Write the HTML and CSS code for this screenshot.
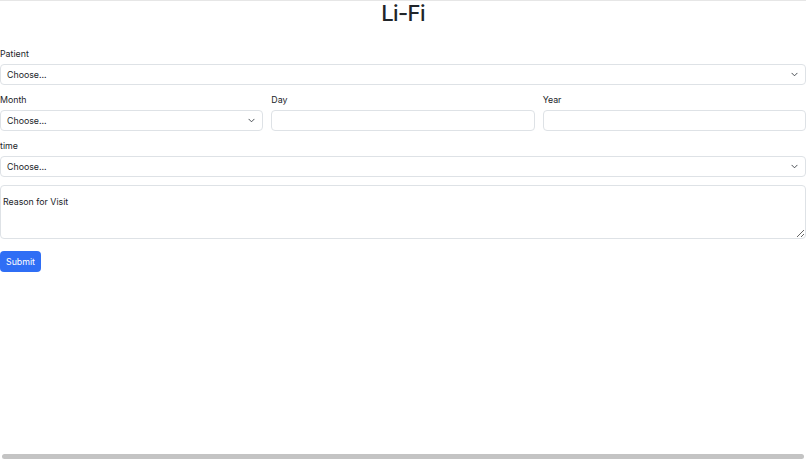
FILE: index.html
```html
<!DOCTYPE html>
<html lang="en">
<head>
<meta charset="utf-8">
<title>Li-Fi</title>
<link rel="stylesheet" href="styles.css">
</head>
<body>
<div class="page">
  <h1 class="title">Li-Fi</h1>
  <form class="form">
    <div class="field">
      <label class="label">Patient</label>
      <div class="select"><span>Choose...</span><svg class="chev" viewBox="0 0 16 16"><path d="M2 5l6 6 6-6" fill="none" stroke="#343a40" stroke-width="2" stroke-linecap="round" stroke-linejoin="round"/></svg></div>
    </div>
    <div class="row">
      <div class="field">
        <label class="label">Month</label>
        <div class="select"><span>Choose...</span><svg class="chev" viewBox="0 0 16 16"><path d="M2 5l6 6 6-6" fill="none" stroke="#343a40" stroke-width="2" stroke-linecap="round" stroke-linejoin="round"/></svg></div>
      </div>
      <div class="field">
        <label class="label">Day</label>
        <div class="input"></div>
      </div>
      <div class="field">
        <label class="label">Year</label>
        <div class="input"></div>
      </div>
    </div>
    <div class="field">
      <label class="label">time</label>
      <div class="select"><span>Choose...</span><svg class="chev" viewBox="0 0 16 16"><path d="M2 5l6 6 6-6" fill="none" stroke="#343a40" stroke-width="2" stroke-linecap="round" stroke-linejoin="round"/></svg></div>
    </div>
    <textarea class="textarea" placeholder="Reason for Visit"></textarea>
    <button type="button" class="btn">Submit</button>
  </form>
  <div class="hscroll"><div class="thumb"></div></div>
</div>
</body>
</html>
```
FILE: styles.css
```css
html, body {
  margin: 0;
  padding: 0;
  background: #fff;
}
body {
  font-family: Inter, "Liberation Sans", sans-serif;
  color: #212529;
  font-size: 8.8px;
}
.page {
  min-height: 461px;
  box-sizing: border-box;
  border-top: 1px solid #e6e6e6;
  display: flex;
  flex-direction: column;
}
.title {
  margin: 0;
  font-family: Inter, "Liberation Sans", sans-serif;
  font-size: 22px;
  font-weight: 500;
  letter-spacing: -0.6px;
  line-height: 25px;
  text-align: center;
  color: #212529;
}
.form {
  margin-top: 21px;
  display: flex;
  flex-direction: column;
}
.field {
  display: flex;
  flex-direction: column;
  margin-bottom: 8px;
}
.label {
  line-height: 13px;
  margin-bottom: 4px;
}
.row {
  display: grid;
  grid-template-columns: 1fr 1fr 1fr;
  column-gap: 8px;
}
.select, .input {
  height: 21px;
  box-sizing: border-box;
  border: 1px solid #dee2e6;
  border-radius: 4px;
  display: flex;
  align-items: center;
  justify-content: space-between;
  padding: 0 7px 0 6px;
  background: #fff;
}
.chev {
  width: 7px;
  height: 7px;
}
.textarea {
  display: block;
  height: 54px;
  box-sizing: border-box;
  margin: 0 0 12px;
  border: 1px solid #dee2e6;
  border-radius: 4px;
  padding: 10px 2px;
  font-family: Inter, "Liberation Sans", sans-serif;
  font-size: 8.8px;
  color: #212529;
  resize: vertical;
}
.textarea::placeholder {
  color: #212529;
  opacity: 1;
}
.btn {
  align-self: flex-start;
  height: 21px;
  padding: 0 6px;
  border: none;
  border-radius: 4px;
  background: #2f6ef5;
  color: #fff;
  font-family: Inter, "Liberation Sans", sans-serif;
  font-size: 8.8px;
}
.hscroll {
  margin-top: auto;
  padding: 0 2px 2px;
}
.thumb {
  height: 5px;
  border-radius: 3px;
  background: #c4c4c4;
}
```
